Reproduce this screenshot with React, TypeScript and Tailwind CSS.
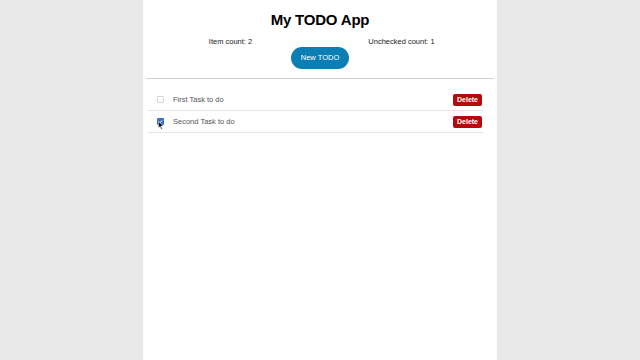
const todos = [
    { id: 1, text: 'First Task to do', checked: false },
    { id: 2, text: 'Second Task to do', checked: true },
];

const App = () => {
    return (
        <div className="flex justify-center w-[640px] h-[360px] bg-[#e9e9e9] font-['Liberation_Sans',Arial,sans-serif]">
            <div className="w-[354px] h-full bg-white">
                <h1 className="text-center text-[15px] font-bold text-black pt-[10px] leading-[20px] tracking-[-0.2px]">My TODO App</h1>
                <div className="flex mt-[7px] text-[7.5px] text-[#222] leading-[10px]">
                    <div className="flex-1 text-center pl-[2px]">Item count: {todos.length}</div>
                    <div className="flex-1 text-center pr-[10px]">Unchecked count: {todos.filter((t) => !t.checked).length}</div>
                </div>
                <div className="flex justify-center">
                    <button className="w-[58px] h-[22px] rounded-full bg-[#0b7fb4] text-white text-[7.5px]">New TODO</button>
                </div>
                <div className="mx-[3px] mt-[9px] border-t border-[#cfcfcf]" />
                <ul className="ml-[5px] mr-[14px] mt-[10px]">
                    {todos.map((todo) => (
                        <li key={todo.id} className="flex items-center h-[22px] border-b border-[#e6e6e6] pl-[9px] pr-[1px]">
                            <div className="relative">
                                {todo.checked ? (
                                    <div className="w-[7px] h-[7px] rounded-[1px] bg-[#3a6fd0] flex items-center justify-center">
                                        <svg width="5" height="5" viewBox="0 0 10 10">
                                            <path d="M2 5.2 L4.2 7.4 L8 2.8" stroke="white" strokeWidth="1.8" fill="none" />
                                        </svg>
                                    </div>
                                ) : (
                                    <div className="w-[7px] h-[7px] rounded-[1px] border border-[#d4d4d4] bg-white" />
                                )}
                                {todo.checked && (
                                    <svg className="absolute left-[1px] top-[3px]" width="6" height="9" viewBox="0 0 12 18">
                                        <path d="M1 1 L1 14 L4 11 L6.5 16.5 L8.5 15.5 L6 10 L10.5 10 Z" fill="black" stroke="white" strokeWidth="1" />
                                    </svg>
                                )}
                            </div>
                            <span className="ml-[9px] text-[7.5px] text-[#555] flex-1">{todo.text}</span>
                            <button className="h-[12px] w-[29px] rounded-[2px] bg-[#b30c0c] text-white text-[7px] font-bold leading-[12px]">
                                Delete
                            </button>
                        </li>
                    ))}
                </ul>
            </div>
        </div>
    );
};

export default App;
